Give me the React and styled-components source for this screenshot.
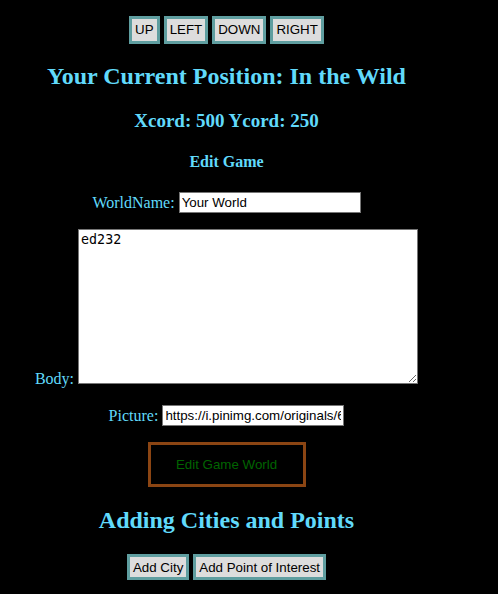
import React, { useState } from "react";
import styled, { createGlobalStyle } from "styled-components";

const GlobalStyle = createGlobalStyle`
    body {
        margin: 8px;
        background-color: #000;
        font-family: "Liberation Serif", "Times New Roman", serif;
    }
`;

const Page = styled.div`
    width: 437px;
    display: flex;
    flex-direction: column;
    align-items: center;
    color: #61dafb;
`;

const Row = styled.div`
    display: flex;
    gap: 4px;
    justify-content: center;
    align-items: center;
    margin-top: ${(props) => props.top || 0}px;
`;

// inline line so the label sits on the textarea's bottom edge
const Line = styled.div`
    text-align: center;
    font-size: 16px;
    line-height: 18px;
    margin-top: ${(props) => props.top || 0}px;
`;

const MoveButton = styled.button`
    font-family: "Liberation Sans", Arial, sans-serif;
    font-size: 13.33px;
    line-height: 14px;
    color: #000;
    background-color: #dddddd;
    border: 3px solid #5f9ea0;
    padding: 4px 3px;
    height: ${(props) => props.h || 28}px;
`;

const Title = styled.h2`
    font-size: ${(props) => props.size}px;
    font-weight: bold;
    margin: ${(props) => props.top}px 0 0 0;
    line-height: ${(props) => props.lh}px;
`;

const Label = styled.label`
    font-size: 16px;
`;

const TextInput = styled.input`
    font-family: "Liberation Sans", Arial, sans-serif;
    font-size: 13.33px;
    width: 182px;
    height: 21px;
    box-sizing: border-box;
    border: 1px solid #767676;
    padding: 1px 2px;
`;

const Body = styled.textarea`
    font-family: "DejaVu Sans Mono", monospace;
    font-size: 13.33px;
    width: 340px;
    height: 155px;
    box-sizing: border-box;
    border: 1px solid #767676;
    padding: 2px;
    margin: 0;
`;

const EditButton = styled.button`
    font-family: "Liberation Sans", Arial, sans-serif;
    font-size: 13.33px;
    color: #006400;
    background-color: #000;
    border: 3px solid #8b4513;
    width: 158px;
    height: 45px;
    margin-top: 16px;
`;

export default function App() {
    const [worldName, setWorldName] = useState("Your World");
    const [body, setBody] = useState("ed232");
    const [picture, setPicture] = useState(
        "https://i.pinimg.com/originals/6c/4e/2a/6c4e2a.jpg"
    );

    return (
        <Page>
            <GlobalStyle />
            <Row top={8}>
                <MoveButton>UP</MoveButton>
                <MoveButton>LEFT</MoveButton>
                <MoveButton>DOWN</MoveButton>
                <MoveButton>RIGHT</MoveButton>
            </Row>
            <Title size={24} top={18} lh={28}>
                Your Current Position: In the Wild
            </Title>
            <Title size={19} top={20} lh={22}>
                Xcord: 500 Ycord: 250
            </Title>
            <Title size={16} top={20} lh={20}>
                Edit Game
            </Title>
            <Row top={20}>
                <Label>WorldName:</Label>
                <TextInput
                    value={worldName}
                    onChange={(e) => setWorldName(e.target.value)}
                />
            </Row>
            <Line top={16}>
                <Label>Body:</Label>{" "}
                <Body value={body} onChange={(e) => setBody(e.target.value)} />
            </Line>
            <Row top={17}>
                <Label>Picture:</Label>
                <TextInput
                    value={picture}
                    onChange={(e) => setPicture(e.target.value)}
                />
            </Row>
            <EditButton>Edit Game World</EditButton>
            <Title size={24} top={19} lh={28}>
                Adding Cities and Points
            </Title>
            <Row top={20}>
                <MoveButton h={26}>Add City</MoveButton>
                <MoveButton h={26}>Add Point of Interest</MoveButton>
            </Row>
        </Page>
    );
}
